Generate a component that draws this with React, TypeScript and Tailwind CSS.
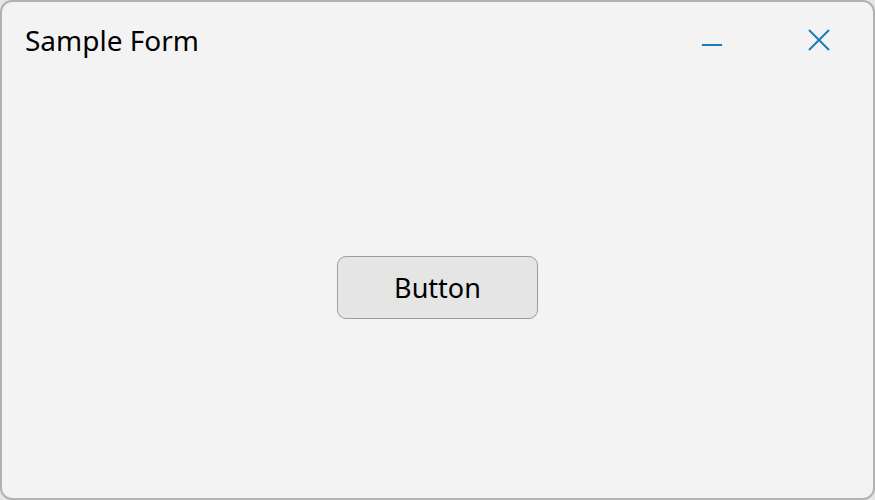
export default function App() {
  return (
    <div className="h-[500px] w-[875px] bg-[#e6e6e6]" style={{ fontFamily: '"Noto Sans", "Open Sans", sans-serif' }}>
      <div className="flex h-full w-full flex-col rounded-[12px] border-2 border-[#b2b2b2] bg-[#f3f3f3]">
        <div className="flex h-[76px] items-start">
          <div className="pl-[23px] pt-[19px] text-[28px] leading-[38px] text-black">Sample Form</div>
          <div className="ml-auto flex items-start">
            <button className="mr-[37px] flex h-[76px] w-[78px] items-start justify-center pt-[42px]">
              <span className="block h-[2px] w-[20px] bg-[#1a7db5]" />
            </button>
            <button className="mr-[23px] flex h-[76px] w-[62px] items-start justify-center pt-[27px]">
              <svg width="22" height="22" viewBox="0 0 22 22" fill="none" stroke="#1a7db5" strokeWidth="2">
                <path d="M1 1L21 21M21 1L1 21" />
              </svg>
            </button>
          </div>
        </div>
        <div className="flex flex-1 items-center justify-center pb-[2px]">
          <button className="h-[63px] w-[201px] rounded-[9px] border border-[#9c9c9c] bg-[#e5e5e5] pt-[3px] text-[27px] text-black">
            Button
          </button>
        </div>
      </div>
    </div>
  );
}
